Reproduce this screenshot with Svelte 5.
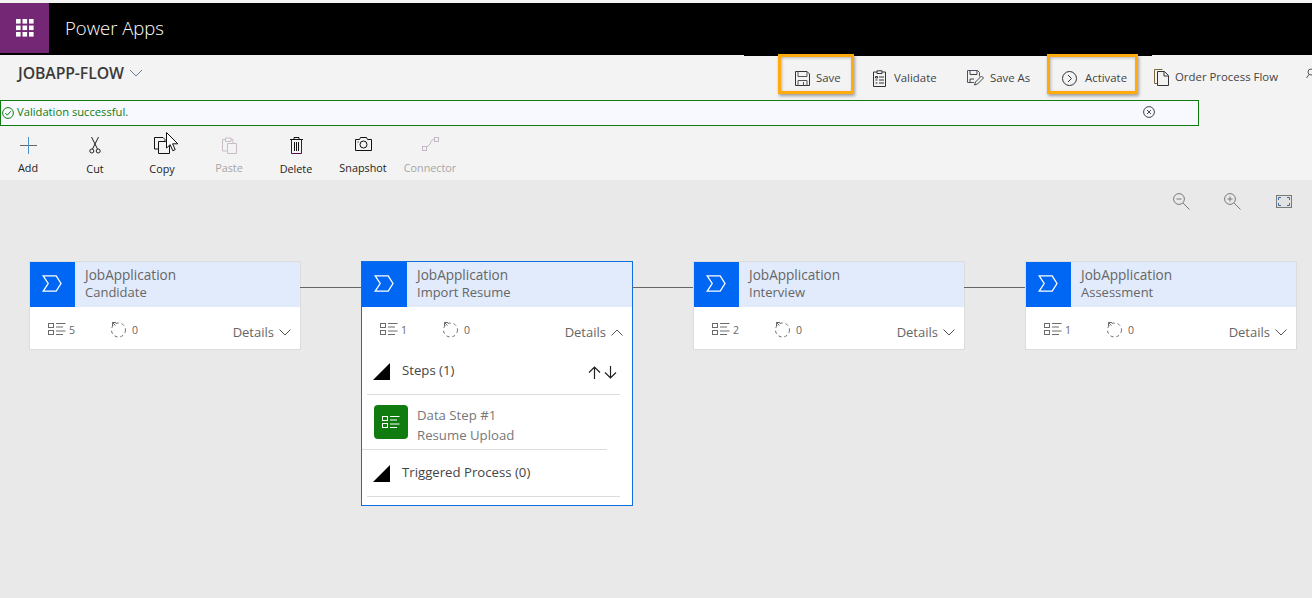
<script>
  const tools = [
    { label: 'Add', icon: 'add' },
    { label: 'Cut', icon: 'cut', low: true },
    { label: 'Copy', icon: 'copy', low: true },
    { label: 'Paste', icon: 'paste', off: true },
    { label: 'Delete', icon: 'del', low: true },
    { label: 'Snapshot', icon: 'snap' },
    { label: 'Connector', icon: 'conn', off: true }
  ];
  const stages = [
    { name: 'Candidate', steps: 5, open: false },
    { name: 'Import Resume', steps: 1, open: true },
    { name: 'Interview', steps: 2, open: false },
    { name: 'Assessment', steps: 1, open: false }
  ];
</script>

{#snippet listIcon(color)}
  <svg width="18" height="15" viewBox="0 0 18 15" fill="none" stroke={color} stroke-width="1">
    <rect x="0.5" y="1.5" width="5" height="4" /><rect x="0.5" y="8.5" width="5" height="4" />
    <path d="M8 1.5h9.5M8 5h7M8 9h9.5M8 12.5h7" />
  </svg>
{/snippet}

<div class="page">
  <header class="suite">
    <div class="waffle">
      <svg width="18" height="18" viewBox="0 0 18 18" fill="#fff">
        {#each [0, 6.5, 13] as y}{#each [0, 6.5, 13] as x}<rect {x} {y} width="4.6" height="4.6" />{/each}{/each}
      </svg>
    </div>
    <span class="brand">Power Apps</span>
  </header>

  <div class="command">
    <div class="title">JOBAPP-FLOW
      <svg width="14" height="8" viewBox="0 0 14 8" fill="none" stroke="#6b7a8c" stroke-width="1"><path d="M1 1l6 6 6-6" /></svg>
    </div>
    <div class="actions">
      <div class="action save">
        <svg width="15" height="15" viewBox="0 0 15 15" fill="none" stroke="#333" stroke-width="1"><path d="M.5.5h11.5l2.500 2.500v11.500H.5z" /><path d="M3 .5v5h9v-5M3 14.500v-5h9v5M8.500 11v3.500" stroke="#555" /></svg>
        <span>Save</span>
      </div>
      <div class="action validate">
        <svg width="13" height="17" viewBox="0 0 13 17" fill="none" stroke="#333" stroke-width="1"><path d="M4 2H.5v14.500h12V2H9" /><path d="M4 .8h5v2.700H4zM2.500 6.500h2v1.500h-2zM2.500 10h2M2.500 13h2M6 7h5M6 10h5M6 13h5" /></svg>
        <span>Validate</span>
      </div>
      <div class="action saveas">
        <svg width="17" height="16" viewBox="0 0 17 16" fill="none" stroke="#444" stroke-width="1"><path d="M7 12.500H.5V.5h10l2 2v4" stroke="#5a4a6a" /><path d="M3 .5v4h7v-4M3 12v-3h4" /><path d="M7.500 15l1-3 6-6 2 2-6 6z" /></svg>
        <span>Save As</span>
      </div>
      <div class="action activate">
        <svg width="15" height="15" viewBox="0 0 15 15" fill="none" stroke="#333" stroke-width="1"><circle cx="7.500" cy="7.500" r="7" /><path d="M6 4l3.500 3.500L6 11" /></svg>
        <span>Activate</span>
      </div>
      <div class="action order">
        <svg width="15" height="17" viewBox="0 0 15 17" fill="none" stroke="#333" stroke-width="1"><path d="M3 14.500H.5V.5h8" stroke="#7a6a3a" /><path d="M3.500 2.500h7l4 4v10h-11zM10 2.500v4.500h4.500" /></svg>
        <span>Order Process Flow</span>
      </div>
      <svg class="clipped" width="8" height="14" viewBox="0 0 8 14" fill="none" stroke="#555" stroke-width="1"><circle cx="5" cy="4" r="3" /><path d="M3 6.500L.5 10" /></svg>
    </div>
  </div>

  <div class="notice-row">
    <div class="notice">
      <svg width="12" height="12" viewBox="0 0 12 12" fill="none" stroke="#107c10" stroke-width="1"><circle cx="6" cy="6" r="5.400" /><path d="M3.300 6.200l2 2 3.500-4" /></svg>
      <span>Validation successful.</span>
      <svg class="close" width="12" height="12" viewBox="0 0 12 12" fill="none" stroke="#444" stroke-width="1"><circle cx="6" cy="6" r="5.400" /><path d="M4 4l4 4M8 4l-4 4" /></svg>
    </div>
  </div>

  <div class="toolbar">
    {#each tools as t}
      <div class="tool" class:off={t.off} class:low={t.low}>
        <div class="tool-icon">
          {#if t.icon === 'add'}
            <svg width="17" height="17" viewBox="0 0 17 17"><path d="M0 8.500h17" stroke="#666" /><path d="M8.500 0v17" stroke="#4a90c8" /></svg>
          {:else if t.icon === 'cut'}
            <svg width="12" height="17" viewBox="0 0 12 17" fill="none" stroke="#222" stroke-width="1"><path d="M2.500 0l6 12M9.500 0l-6 12" /><circle cx="2.800" cy="14" r="2" /><circle cx="9.200" cy="14" r="2" /></svg>
          {:else if t.icon === 'copy'}
            <svg width="16" height="17" viewBox="0 0 16 17" fill="none" stroke="#111" stroke-width="1"><path d="M4 12H.5V.5H9l2 2v2" /><path d="M4.500 4.500h7l4 4v8h-11z" fill="#f3f3f3" /></svg>
          {:else if t.icon === 'paste'}
            <svg width="15" height="17" viewBox="0 0 15 17" fill="none" stroke="#c9bcc9" stroke-width="1"><path d="M4 2.500H.5V14H5M9 2.500h2V6" /><path d="M3.500 1h5.500v3.500H3.500zM5.500 6.500h9v10h-9z" /></svg>
          {:else if t.icon === 'del'}
            <svg width="13" height="17" viewBox="0 0 13 17" fill="none" stroke="#111" stroke-width="1"><path d="M0 2.500h13M4 2.500V.5h5v2" /><path d="M1.500 2.500v14h10v-14" stroke="#520a52" /><path d="M4.500 5v9M6.500 5v9M8.500 5v9" /></svg>
          {:else if t.icon === 'snap'}
            <svg width="17" height="14" viewBox="0 0 17 14" fill="none" stroke="#111" stroke-width="1"><path d="M.5 2.500h4l1-2h6l1 2h4v11H.5z" /><circle cx="8.500" cy="7.500" r="3.500" /><path d="M2.500 5h1" /></svg>
          {:else}
            <svg width="17" height="14" viewBox="0 0 17 14" fill="none" stroke="#c4b8c4" stroke-width="1"><rect x=".5" y="9.500" width="4" height="4" /><rect x="12.500" y=".5" width="4" height="4" /><path d="M5 10l3-3 1.500-3.500 3-1.500" /></svg>
          {/if}
        </div>
        <span>{t.label}</span>
      </div>
    {/each}
    <svg class="cursor" width="13" height="21" viewBox="0 0 13 21"><path d="M.5.5v15.500l3.700-3.300 2.600 6 2.400-1-2.600-5.900h5.200z" fill="#fff" stroke="#111" stroke-width="1" /></svg>
  </div>

  <main class="canvas">
    <div class="zoom">
      <svg width="17" height="17" viewBox="0 0 17 17" fill="none" stroke="#7a7a7a" stroke-width="1"><circle cx="6" cy="6" r="5.400" /><path d="M3.500 6h5M10 10l6.500 6.500" /></svg>
      <svg width="17" height="17" viewBox="0 0 17 17" fill="none" stroke="#7a7a7a" stroke-width="1"><circle cx="6" cy="6" r="5.400" /><path d="M3.500 6h5M6 3.500v5M10 10l6.500 6.500" /></svg>
      <svg width="16" height="13" viewBox="0 0 16 13" fill="none" stroke="#7a7a7a" stroke-width="1"><rect x=".5" y=".5" width="15" height="12" fill="#e2e2e2" /><path d="M2.500 5V2.500H5M11 2.500h2.500V5M13.500 8v2.500H11M5 10.500H2.500V8" stroke="#3a6ea5" /></svg>
    </div>

    <div class="flow">
      {#each stages as s, i}
        {#if i > 0}<div class="link"></div>{/if}
        <article class="card" class:selected={s.open}>
          <div class="card-head">
            <div class="chevron">
              <svg width="20" height="17" viewBox="0 0 20 17" fill="none" stroke="#fff" stroke-width="1.300"><path d="M1.200.8h13l4.800 7.700-4.800 7.700h-13l5-7.700z" /></svg>
            </div>
            <div class="card-title"><div class="entity">JobApplication</div><div>{s.name}</div></div>
          </div>
          <div class="stats">
            <div class="stat first">{@render listIcon('#6a6a6a')}<span>{s.steps}</span></div>
            <div class="stat second">
              <svg width="17" height="17" viewBox="0 0 17 17" fill="none" stroke="#6a6a6a" stroke-width="1"><circle cx="8.500" cy="9" r="7" stroke-dasharray="3 3" /><path d="M2.500 5V1.500H6M2.500 1.500l3 3" /></svg>
              <span>0</span>
            </div>
            <div class="details">Details
              <svg width="12" height="7" viewBox="0 0 12 7" fill="none" stroke="#555" stroke-width="1"><path d={s.open ? 'M.5 6.500L6 1l5.500 5.500' : 'M.5.5L6 6 11.500.5'} /></svg>
            </div>
          </div>
          {#if s.open}
            <div class="section steps">
              <i class="tri"></i><span>Steps (1)</span>
              <div class="arrows">
                <svg width="29" height="13" viewBox="0 0 29 13" fill="none" stroke="#222" stroke-width="1.200"><path d="M6.500 13V1M1 6.500l5.500-5.500 5.500 5.500M22.500 0v12M17 6.500l5.500 5.500 5.500-5.500" /></svg>
              </div>
            </div>
            <div class="step">
              <div class="step-icon">{@render listIcon('#fff')}</div>
              <div class="step-text"><div>Data Step #1</div><div>Resume Upload</div></div>
            </div>
            <div class="section trigger"><i class="tri"></i><span>Triggered Process (0)</span></div>
            <div class="tail"></div>
          {/if}
        </article>
      {/each}
    </div>
  </main>
</div>

<style>
  :global(body) { margin: 0; background: #e9e9e9; }
  .page { width: 1312px; height: 598px; overflow: hidden; display: flex; flex-direction: column; padding-top: 3px; box-sizing: border-box; background: #f3f3f3; font-family: "Open Sans", "Noto Sans", sans-serif; color: #333; }
  .suite { height: 52px; flex: none; background: #000; display: flex; align-items: flex-start; }
  .waffle { width: 49px; height: 50px; background: #742774; display: flex; align-items: center; justify-content: center; }
  .brand { color: #fff; font-size: 18.500px; line-height: 50px; margin-left: 16px; font-weight: 300; }

  .command { height: 45px; flex: none; position: relative; }
  .command::before { content: ""; position: absolute; left: 744px; width: 408px; top: 0; height: 1px; background: #000; }
  .title { position: absolute; left: 18px; top: 8px; font-size: 15.800px; line-height: 20px; font-weight: 600; color: #3b3a39; display: flex; align-items: center; gap: 5px; letter-spacing: -0.1px; }
  .actions { display: flex; position: absolute; left: 0; top: 0; right: 0; height: 45px; }
  .action { position: absolute; top: 14px; display: flex; align-items: center; font-size: 11.400px; line-height: 18px; color: #444; white-space: nowrap; }
  .save { left: 795px; gap: 6px; } .validate { left: 873px; gap: 8px; } .saveas { left: 967px; gap: 6px; }
  .activate { left: 1062px; gap: 8px; } .order { left: 1154px; top: 13px; gap: 6px; }
  .save::after, .activate::after { content: ""; position: absolute; top: -15px; bottom: -7px; border: 3px solid #ffaa0f; box-shadow: 1px 2px 3px rgba(0,0,0,.35), inset 1px 1px 3px rgba(0,0,0,.25); box-sizing: border-box; }
  .save::after { left: -17px; width: 76px; }
  .activate::after { left: -15px; width: 91px; }
  .clipped { position: absolute; left: 1306px; top: 13px; }

  .notice-row { height: 26px; flex: none; }
  .notice { width: 1199px; height: 26px; box-sizing: border-box; border: 1px solid #107c10; background: #f8f9fe; display: flex; align-items: center; padding-left: 1px; gap: 3px; color: #107c10; font-size: 11.200px; line-height: 22px; position: relative; }
  .notice span { margin-top: -2px; }
  .close { position: absolute; left: 1142px; top: 5px; }

  .toolbar { height: 54px; flex: none; display: flex; position: relative; margin-left: -5.500px; }
  .tool { width: 67px; flex: none; display: flex; flex-direction: column; align-items: center; font-size: 10.800px; color: #222; }
  .tool.low span { margin-top: 1px; }
  .tool.off { color: #a6a6a6; }
  .tool-icon { height: 17px; margin-top: 11px; margin-bottom: 6px; display: flex; align-items: flex-start; }
  .tool span { line-height: 16px; }
  .cursor { position: absolute; left: 171.500px; top: 6px; }

  .canvas { flex: 1; background: #e9e9e9; position: relative; min-height: 0; }
  .zoom { position: absolute; top: 13px; left: 1173px; display: flex; gap: 34px; align-items: center; }
  .zoom svg:last-child { margin-left: 1px; }
  .flow { display: flex; align-items: flex-start; padding: 82px 0 0 30px; }
  .link { width: 62px; height: 1px; background: #666; margin-top: 25px; flex: none; }
  .card { width: 270px; flex: none; box-sizing: border-box; background: #fff; outline: 1px solid #dcdcdc; }
  .card.selected { outline: 1px solid #0f6fe0; }
  .card-head { height: 45px; display: flex; background: #e1ebfc; }
  .chevron { width: 45px; background: #0067f5; display: flex; align-items: flex-start; justify-content: flex-start; padding: 13px 0 0 12px; box-sizing: border-box; }
  .card-title { margin-left: 10px; padding-top: 4px; font-size: 13px; line-height: 17px; color: #666; }
  .entity { font-size: 13.600px; margin-bottom: 1px; }
  .stats { height: 42px; display: flex; align-items: flex-start; position: relative; color: #666; font-size: 10.500px; }
  .selected .stats { height: 43px; }
  .stat { position: absolute; top: 14px; display: flex; align-items: center; height: 17px; }
  .first { left: 18px; gap: 3px; } .second { left: 80px; gap: 5px; }
  .details { position: absolute; right: 9px; top: 15px; font-size: 13px; line-height: 20px; display: flex; align-items: center; gap: 5px; }
  .section { display: flex; align-items: flex-start; position: relative; font-size: 13.200px; line-height: 17px; color: #444; margin: 0 12px 0 5px; border-bottom: 1px solid #dcdcdc; }
  .steps { height: 45px; padding-left: 6px; box-sizing: border-box; }
  .steps span { margin-left: 12px; margin-top: 12px; }
  .trigger { height: 47px; padding-left: 6px; box-sizing: border-box; }
  .trigger span { margin-left: 12px; margin-top: 14px; }
  .tri { width: 17px; height: 17px; background: #000; clip-path: polygon(100% 0, 100% 100%, 0 100%); flex: none; margin-top: 13px; }
  .trigger .tri { margin-top: 15px; }
  .arrows { position: absolute; right: 3px; top: 16px; line-height: 0; }
  .step { height: 55px; display: flex; align-items: flex-start; margin-right: 25px; border-bottom: 1px solid #dcdcdc; padding-left: 12px; box-sizing: border-box; }
  .step-icon { width: 34px; height: 34px; background: #107c10; border-radius: 4px; margin-top: 10px; display: flex; align-items: center; justify-content: center; }
  .step-text { margin-left: 9px; margin-top: 10px; font-size: 13.200px; line-height: 20px; color: #777; }
  .tail { height: 8px; }
</style>
